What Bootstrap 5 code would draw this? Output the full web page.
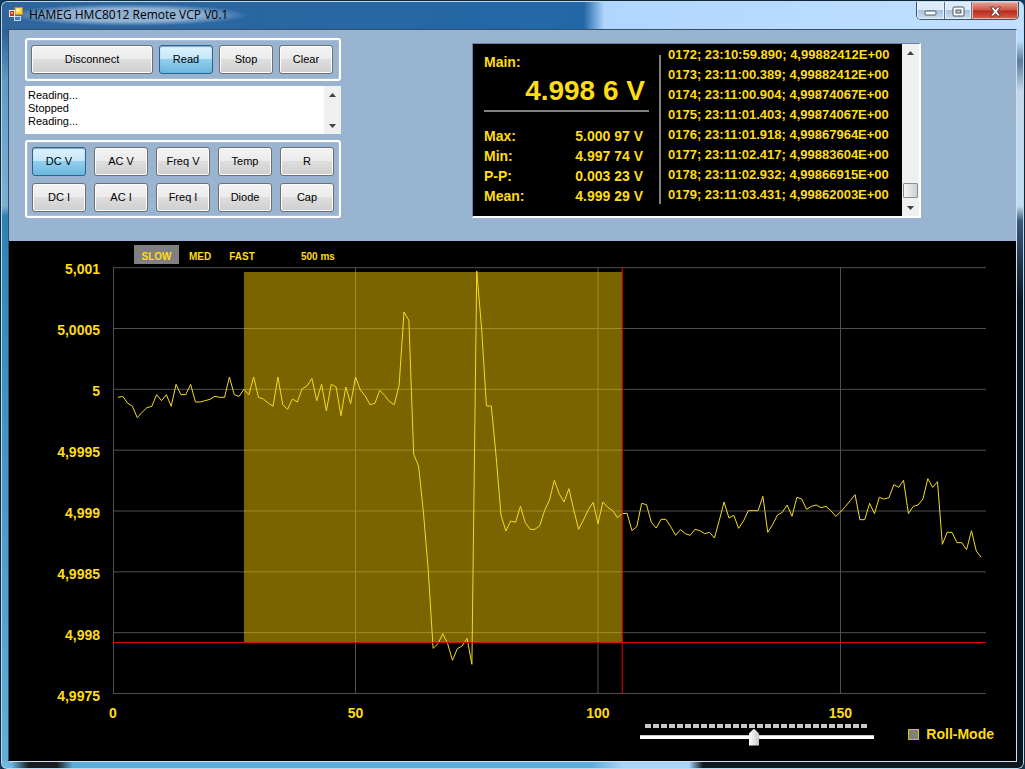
<!DOCTYPE html>
<html lang="en">
<head>
<meta charset="utf-8">
<meta name="viewport" content="width=device-width, initial-scale=1">
<title>HAMEG HMC8012 Remote VCP V0.1</title>
<link href="https://cdn.jsdelivr.net/npm/bootstrap@5.3.0/dist/css/bootstrap.min.css" rel="stylesheet">
<style>
  :root { --amber: #ffdc14; --panel: #99b4d1; }
  body { background: #123a5c; font-family: "Liberation Sans", Arial, sans-serif; font-size: 11px; line-height: 13px; color: #000; }
  .app-window {
    border: 1px solid #12263a; border-radius: 7px; padding: 0 7px 7px;
    background:
      linear-gradient(90deg, #70b8e2 0 10px, #181c20 28px 56px, #5cacdc 72px 590px, #a8d4fa 622px 688px, #10181f 702px) bottom / 100% 8px no-repeat,
      linear-gradient(180deg, #2d6094 30px, #5f9cc6 80px, #7fb0d0 205px, #2f83b4 215px, #62afd8) left / 8px 100% no-repeat,
      linear-gradient(180deg, #bcdcff 40px, #5b7a98 60px, #c4d7e8 90px, #c4dcf0 205px, #3c5878 220px, #0c151f 300px) right / 8px 100% no-repeat,
      #2868a4;
    box-shadow: inset 0 0 0 1px #b9dcf2;
  }
  .title-bar { height: 27px; padding-left: 7px; background: linear-gradient(90deg, #2f659c, #2268a8 57%, #b0d6ff 59%, #c2e0ff); margin: 1px -6px 0; border-radius: 6px 6px 0 0; }
  .title-text { font: 12px/22px "Open Sans", "Noto Sans", sans-serif; background: radial-gradient(closest-side, #a9c4dfcc 60%, transparent); padding: 0 20px; margin: 2px 0 0 -14px; }
  .caption-group { border: 1px solid #3d5068; border-top: 0; border-radius: 0 0 5px 5px; overflow: hidden; height: 18px; margin-right: 4px; }
  .caption-group button { border: 0; padding: 0; width: 27px; background: linear-gradient(#dceafa 45%, #a9c3de 50%, #c9def2); box-shadow: inset 0 0 0 1px #e6f2ff; }
  .caption-group button + button { border-left: 1px solid #5d7188; }
  .caption-group .caption-close { width: 47px; background: linear-gradient(#e5a397, #cf5442 48%, #b4281a 52%, #d96450); box-shadow: inset 0 0 0 1px #eeb1a5; }
  .client { border: 1px solid #33506a; border-right-color: #cfe0ee; border-bottom-color: #cfe0ee; }
  .control-area { background: var(--panel); padding: 8px 95px 23px 16px; }
  .left-col { flex: 0 0 315px; }
  .group-frame { border: 2px solid #fff; border-radius: 3px; box-shadow: inset 0 0 0 1px #a9bfd8; }
  .run-row { gap: 6px; padding: 5px 4px; }
  .win-btn { height: 29px; padding: 0; border: 1px solid #707070; border-radius: 3px; background: linear-gradient(#f3f3f3, #ebebeb 49%, #dddddd 50%, #cfcfcf); box-shadow: inset 0 0 0 1px #fcfcfc; color: #000; font-size: 11px; line-height: 13px; flex: 0 0 54px; }
  .win-btn.wide { flex: 0 0 122px; }
  .win-btn.active { border-color: #2c628b; background: linear-gradient(#e0f3fc, #c2e6f8 49%, #92cfee 50%, #6ab6dd); box-shadow: inset 0 1px 1px #7fa8c2; }
  .key-grid { display: grid; grid-template-columns: repeat(5, 54px); gap: 7px 8px; padding: 5px 5px 4px; }
  .status-box { height: 48px; background: #fff; margin: 5px 0 6px; }
  .plain-text { border: 0; resize: none; overflow: hidden; background: transparent; outline: 0; white-space: pre; }
  .status-box textarea { padding: 3px; font-size: 11px; line-height: 13px; }
  .scroll-rail { width: 17px; background: #f0f0f0; padding: 6px 0 5px; }
  .scroll-thumb { width: 15px; height: 15px; border: 1px solid #8f8f8f; border-radius: 1px; background: linear-gradient(90deg, #f4f4f4, #cfcfd2); }
  .meter { width: 449px; height: 175px; border: 1px solid #70809a; border-right: 2px solid #fff; border-bottom: 2px solid #fff; background: #000; margin-top: 5px; }
  .narrow-font { font-family: "Liberation Sans Narrow", "Arial Narrow", "Liberation Sans", sans-serif; font-weight: 700; color: var(--amber); font-size: 14px; line-height: 20px; }
  .readout { width: 176px; padding: 8px 0 0 11px; }
  .main-value { font-size: 28px; line-height: 38px; border-bottom: 2px solid #808080; padding-right: 4px; margin-bottom: 14px; }
  .stat-list th, .stat-list td { padding: 0; }
  .stat-list td { padding-right: 6px; text-align: right; }
  .divider { width: 2px; background: #808080; margin: 11px 7px 12px 10px; }
  .log-text { padding: 1px 0 0; font-size: 13px; }
  .chart-area { background: #000; height: 520px; padding: 4px 30px 0 0; }
  .rate-bar { margin-left: 125px; height: 19px; font-size: 10px; line-height: 15px; }
  .rate-bar button { border: 0; padding: 4px 0 0 0; background: none; color: inherit; font: inherit; width: 42px; }
  .rate-bar button.active { background: #808080; width: 45px; }
  .rate-value { margin-left: 38px; padding-top: 4px; }
  .plot-row { height: 427px; margin-top: 3px; }
  .y-axis { width: 91px; margin-right: 13px; }
  .y-axis span { height: 0; line-height: 4px; text-align: right; }
  .x-axis { margin-left: 104px; }
  .x-ticks { width: 83.33%; height: 30px; padding-top: 9px; }
  .x-ticks span { width: 0; }
  .plot-svg line, .plot-svg polyline { vector-effect: non-scaling-stroke; fill: none; }
  .foot-row { margin-right: -8px; }
  .slider-box { width: 234px; margin-right: 34px; }
  .tick-strip { height: 4px; margin: 0 5px 7px; background: repeating-linear-gradient(90deg, #c8c8c8 0 6px, #000 6px 8px); }
  .track { appearance: none; -webkit-appearance: none; height: 4px; background: linear-gradient(#c8c8c8 1px, #fff 1px); }
  .track::-webkit-slider-thumb { -webkit-appearance: none; width: 10px; height: 17px; background: linear-gradient(90deg, #fff, #c9c9c9); clip-path: polygon(50% 0, 100% 30%, 100% 100%, 0 100%, 0 30%); }
  .roll-check { appearance: none; -webkit-appearance: none; width: 11px; height: 11px; margin: 0 7px 0 0; background: #808080; border: 1px solid #d8c018; }
</style>
</head>
<body>
<div class="app-window d-flex flex-column min-vh-100">
  <header class="title-bar d-flex justify-content-between align-items-start">
    <div class="d-flex align-items-center">
      <svg width="14" height="14" viewBox="0 0 14 14" style="z-index:1">
        <rect x="6" y="0.500" width="7.500" height="7" fill="#ffd03c" stroke="#c98d10"/><rect x="7" y="1.500" width="4" height="3" fill="#fff2a8"/>
        <rect x="0.500" y="3.500" width="5" height="6" fill="#b93a1e" stroke="#f5e1dc"/><rect x="2" y="5" width="2" height="2" fill="#ef9a80"/>
        <rect x="5.500" y="9.500" width="6" height="4" fill="#3f78d8" stroke="#c4dbfb"/>
      </svg>
      <h1 class="title-text">HAMEG HMC8012 Remote VCP V0.1</h1>
    </div>
    <div class="caption-group d-flex">
      <button type="button" aria-label="Minimize"><svg width="13" height="9" viewBox="0 0 13 9"><rect x="1" y="4" width="11" height="4" rx="1" fill="#fff" stroke="#4a5566"/></svg></button>
      <button type="button" aria-label="Maximize"><svg width="13" height="11" viewBox="0 0 13 11"><rect x="1" y="1" width="11" height="9" rx="1" fill="#fff" stroke="#4a5566"/><rect x="4" y="4" width="5" height="3" fill="#b9cde2" stroke="#4a5566"/></svg></button>
      <button type="button" class="caption-close" aria-label="Close"><svg width="13" height="11" viewBox="0 0 13 11"><path d="M1.500 1h3l2 2.500L8.500 1h3L8.300 5.500 11.500 10h-3l-2-2.500L4.500 10h-3l3.200-4.500z" fill="#fff" stroke="#5a3b40"/></svg></button>
    </div>
  </header>

  <main class="client flex-grow-1 d-flex flex-column">
    <section class="control-area d-flex justify-content-between align-items-start">
      <div class="left-col">
        <div class="group-frame run-row d-flex">
          <button type="button" class="win-btn wide">Disconnect</button>
          <button type="button" class="win-btn active">Read</button>
          <button type="button" class="win-btn">Stop</button>
          <button type="button" class="win-btn">Clear</button>
        </div>
        <div class="status-box d-flex">
          <textarea class="plain-text flex-grow-1" readonly aria-label="Status">Reading...
Stopped
Reading...</textarea>
          <div class="scroll-rail d-flex flex-column justify-content-between align-items-center">
            <svg width="7" height="5" viewBox="0 0 7 5"><path d="M0 5h7L3.500 1z" fill="#404040"/></svg>
            <svg width="7" height="5" viewBox="0 0 7 5"><path d="M0 0h7L3.500 4z" fill="#404040"/></svg>
          </div>
        </div>
        <div class="group-frame key-grid">
          <button type="button" class="win-btn active">DC V</button>
          <button type="button" class="win-btn">AC V</button>
          <button type="button" class="win-btn">Freq V</button>
          <button type="button" class="win-btn">Temp</button>
          <button type="button" class="win-btn">R</button>
          <button type="button" class="win-btn">DC I</button>
          <button type="button" class="win-btn">AC I</button>
          <button type="button" class="win-btn">Freq I</button>
          <button type="button" class="win-btn">Diode</button>
          <button type="button" class="win-btn">Cap</button>
        </div>
      </div>

      <div class="meter d-flex narrow-font">
        <div class="readout">
          <div>Main:</div>
          <div class="main-value text-end">4.998 6 V</div>
          <table class="stat-list w-100">
            <tbody>
              <tr><th scope="row">Max:</th><td>5.000 97 V</td></tr>
              <tr><th scope="row">Min:</th><td>4.997 74 V</td></tr>
              <tr><th scope="row">P-P:</th><td>0.003 23 V</td></tr>
              <tr><th scope="row">Mean:</th><td>4.999 29 V</td></tr>
            </tbody>
          </table>
        </div>
        <div class="divider"></div>
        <textarea class="plain-text narrow-font log-text flex-grow-1" readonly aria-label="Log">0172; 23:10:59.890; 4,99882412E+00
0173; 23:11:00.389; 4,99882412E+00
0174; 23:11:00.904; 4,99874067E+00
0175; 23:11:01.403; 4,99874067E+00
0176; 23:11:01.918; 4,99867964E+00
0177; 23:11:02.417; 4,99883604E+00
0178; 23:11:02.932; 4,99866915E+00
0179; 23:11:03.431; 4,99862003E+00</textarea>
        <div class="scroll-rail d-flex flex-column align-items-center">
          <svg width="7" height="5" viewBox="0 0 7 5"><path d="M0 5h7L3.500 1z" fill="#404040"/></svg>
          <div class="scroll-thumb mt-auto mb-2"></div>
          <svg width="7" height="5" viewBox="0 0 7 5"><path d="M0 0h7L3.500 4z" fill="#404040"/></svg>
        </div>
      </div>
    </section>

    <section class="chart-area narrow-font flex-grow-1">
      <div class="rate-bar d-flex">
        <button type="button" class="active">SLOW</button>
        <button type="button">MED</button>
        <button type="button">FAST</button>
        <span class="rate-value">500 ms</span>
      </div>
      <div class="plot-row d-flex">
        <div class="y-axis d-flex flex-column justify-content-between">
          <span>5,001</span><span>5,0005</span><span>5</span><span>4,9995</span><span>4,999</span><span>4,9985</span><span>4,998</span><span>4,9975</span>
        </div>
        <svg class="plot-svg flex-grow-1 h-100" viewBox="0 0 180 1281" preserveAspectRatio="none" role="img" aria-label="Voltage samples">
          <g id="grid" stroke="#505050"></g>
          <rect x="27" y="15" width="78" height="1112" fill="#7a6400"/>
          <g id="gridOver" stroke="#a08c20"></g>
          <polyline id="trace" stroke="#f5dc1e" stroke-width="1"/>
          <line x1="105" x2="105" y1="0" y2="1281" stroke="#e00808"/>
          <line x1="0" x2="180" y1="1126.500" y2="1126.500" stroke="#e00808"/>
        </svg>
      </div>
      <div class="x-axis">
        <div class="x-ticks d-flex justify-content-between">
          <span class="d-flex justify-content-center">0</span><span class="d-flex justify-content-center">50</span><span class="d-flex justify-content-center">100</span><span class="d-flex justify-content-center">150</span>
        </div>
      </div>
      <div class="foot-row d-flex justify-content-end align-items-start">
        <div class="slider-box">
          <div class="tick-strip"></div>
          <input type="range" class="track d-block w-100" min="0" max="1000" value="485" aria-label="Interval">
        </div>
        <label class="d-flex align-items-center"><input type="checkbox" class="roll-check">Roll-Mode</label>
      </div>
    </section>
  </main>
</div>
<script src="https://cdn.jsdelivr.net/npm/bootstrap@5.3.0/dist/js/bootstrap.bundle.min.js"></script>
<script>
  // Trace height per sample, measured down from the top of the plot.
  const samples = [
    391,388,408,418,452,436,422,418,383,401,383,418,352,383,383,352,405,405,401,397,388,391,391,330,383,
    388,367,383,330,391,396,408,418,330,413,427,396,405,365,357,334,401,352,432,352,360,446,360,410,330,
    369,387,413,409,370,385,404,413,354,135,160,562,597,735,909,1144,1130,1100,1130,1180,1145,1137,1114,1192,12,
    184,417,417,569,744,792,762,766,718,767,787,787,776,730,699,640,680,705,665,729,787,759,728,706,770,
    705,721,730,752,740,739,791,779,709,713,766,783,757,757,779,805,788,800,805,787,791,800,796,813,761,
    705,753,745,784,762,731,731,731,688,796,773,744,736,714,748,691,696,727,718,714,722,718,731,748,735,
    719,701,683,758,758,709,740,691,696,692,653,661,640,740,718,714,696,635,661,644,832,796,796,827,827,
    848,791,852,871];
  document.getElementById('trace').setAttribute('points', samples.map((y, i) => (i + 1) + ',' + y).join(' '));

  const line = (g, x1, y1, x2, y2) => {
    const l = document.createElementNS('http://www.w3.org/2000/svg', 'line');
    Object.entries({ x1, y1, x2, y2 }).forEach(([k, v]) => l.setAttribute(k, v));
    document.getElementById(g).appendChild(l);
  };
  for (let i = 0; i < 8; i++) {
    const y = 2 + i * 182.5;
    line('grid', 0, y, 180, y);
    if (i > 0 && i < 7) line('gridOver', 27, y, 105, Math.min(y, 1127));
  }
  [0.1, 50, 100, 150].forEach(x => line('grid', x, 0, x, 1281));
  [50, 100].forEach(x => line('gridOver', x, 15, x, 1127));
</script>
</body>
</html>
